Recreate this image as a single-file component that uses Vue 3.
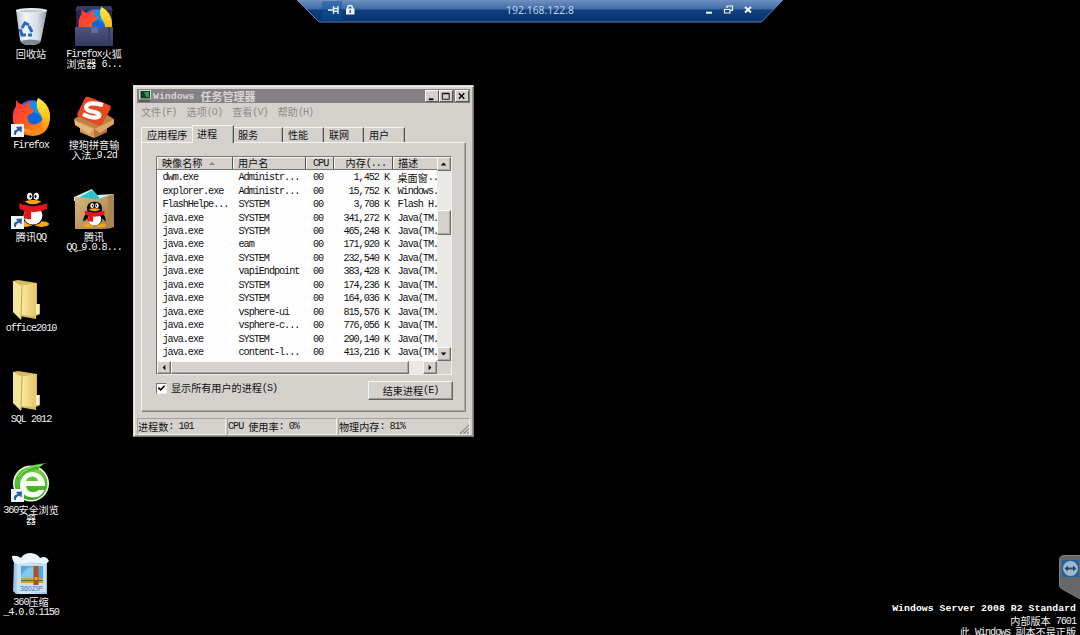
<script setup>
import { h } from 'vue'

// Splits mixed text so half-width glyphs sit on a narrower grid than CJK ones.
const T = (props) =>
  h('span', { class: 'tx' },
    (props.s.match(/[\x20-\x7e]+|[^\x20-\x7e]+/g) || []).map((p) =>
      h('span', { class: /^[\x20-\x7e]/.test(p) ? 'la' : 'cj' }, p)))
T.props = ['s']

const items = [
  { id: 'bin', col: 'a', row: 'r0', lines: ['回收站'] },
  { id: 'ffbox', col: 'b', row: 'r0', lines: ['Firefox火狐', '浏览器 6...'] },
  { id: 'ff', col: 'a', row: 'r1', lines: ['Firefox'], link: true },
  { id: 'sogou', col: 'b', row: 'r1', lines: ['搜狗拼音输', '入法_9.2d'] },
  { id: 'qq', col: 'a', row: 'r2', lines: ['腾讯QQ'], link: true },
  { id: 'qqbox', col: 'b', row: 'r2', lines: ['腾讯', 'QQ_9.0.8...'] },
  { id: 'folder', col: 'a', row: 'r3', lines: ['office2010'] },
  { id: 'folder', col: 'a', row: 'r4', lines: ['SQL 2012'] },
  { id: 'e360', col: 'a', row: 'r5', lines: ['360安全浏览', '器'], link: true },
  { id: 'zip', col: 'a', row: 'r6', lines: ['360压缩', '_4.0.0.1150'] },
]
const menus = ['文件(F)', '选项(O)', '查看(V)', '帮助(H)']
const rows = [
  ['dwm.exe', 'Administr...', '1,452 K', '桌面窗..'],
  ['explorer.exe', 'Administr...', '15,752 K', 'Windows.'],
  ['FlashHelpe...', 'SYSTEM', '3,708 K', 'Flash H.'],
  ['java.exe', 'SYSTEM', '341,272 K', 'Java(TM.'],
  ['java.exe', 'SYSTEM', '465,248 K', 'Java(TM.'],
  ['java.exe', 'eam', '171,920 K', 'Java(TM.'],
  ['java.exe', 'SYSTEM', '232,540 K', 'Java(TM.'],
  ['java.exe', 'vapiEndpoint', '383,428 K', 'Java(TM.'],
  ['java.exe', 'SYSTEM', '174,236 K', 'Java(TM.'],
  ['java.exe', 'SYSTEM', '164,036 K', 'Java(TM.'],
  ['java.exe', 'vsphere-ui', '815,576 K', 'Java(TM.'],
  ['java.exe', 'vsphere-c...', '776,056 K', 'Java(TM.'],
  ['java.exe', 'SYSTEM', '290,140 K', 'Java(TM.'],
  ['java.exe', 'content-l...', '413,216 K', 'Java(TM.'],
]
</script>

<template>
  <div class="desktop">
    <svg class="defs" width="0" height="0">
      <defs>
        <linearGradient id="gFire" x1="0" y1="0" x2="1" y2="1"><stop offset="0" stop-color="#ff2a45" /><stop offset=".5" stop-color="#ff5a20" /><stop offset="1" stop-color="#ffb010" /></linearGradient>
        <linearGradient id="gYel" x1="0" y1="0" x2="0" y2="1"><stop offset="0" stop-color="#fff04a" /><stop offset=".5" stop-color="#ffc51c" /><stop offset="1" stop-color="#ff7a18" /></linearGradient>
        <linearGradient id="gBin" x1="0" x2="1"><stop offset="0" stop-color="#b9c2cc" /><stop offset=".3" stop-color="#f2f6fa" /><stop offset=".7" stop-color="#d4dce5" /><stop offset="1" stop-color="#8f9aa6" /></linearGradient>
        <linearGradient id="gBox" x1="0" y1="0" x2="0" y2="1"><stop offset="0" stop-color="#4d5582" /><stop offset="1" stop-color="#33395f" /></linearGradient>
        <linearGradient id="gFold" x1="0" x2="1"><stop offset="0" stop-color="#fdf0a8" /><stop offset="1" stop-color="#e3c566" /></linearGradient>
        <linearGradient id="gKraft" x1="0" y1="0" x2="1" y2="1"><stop offset="0" stop-color="#d8b87c" /><stop offset="1" stop-color="#a17c47" /></linearGradient>
        <linearGradient id="gGreen" x1="0" y1="0" x2="0" y2="1"><stop offset="0" stop-color="#7bd64b" /><stop offset="1" stop-color="#2ba51c" /></linearGradient>
        <linearGradient id="gZip" x1="0" x2="1"><stop offset="0" stop-color="#8fbbe3" /><stop offset=".25" stop-color="#d9ecfa" /><stop offset="1" stop-color="#9dc4e8" /></linearGradient>
        <symbol id="fox" viewBox="0 0 40 40">
          <circle cx="21" cy="19" r="16" fill="#1267d8" />
          <path d="M14 8Q22 1 29 7L30 20Q23 13 16 16Z" fill="#1591ed" />
          <path d="M5 3Q9 8 13 8Q16 5 20 4Q17 9 20 12L23 13Q22 17 17 18Q15 24 20 27Q27 29 32 22Q32 16 28 12Q24 7 27 1Q39 7 39 21Q38 38 22 39Q4 38 2 24Q1 14 5 9Z" fill="url(#gFire)" />
          <path d="M27 1Q39 7 39 21Q38 33 27 37Q34 27 30 18Q23 10 27 1Z" fill="url(#gYel)" />
          <path d="M5 28Q14 40 29 33Q19 37 8 27Z" fill="#ff9c1f" />
        </symbol>
        <symbol id="penguin" viewBox="0 0 36 40">
          <ellipse cx="10" cy="36" rx="8" ry="3" fill="#f6a51a" /><ellipse cx="27" cy="36" rx="8" ry="3" fill="#f6a51a" />
          <path d="M7 17Q1 23 1 30Q4 30 7 26Q9 37 18 37Q28 37 30 26Q33 30 35 30Q35 23 29 17Z" fill="#080808" />
          <ellipse cx="18" cy="27" rx="10" ry="9.500" fill="#fff" />
          <path d="M7 14Q5 1 18 1Q31 1 29 14L27 19H9Z" fill="#080808" />
          <ellipse cx="14.500" cy="6.500" rx="2.800" ry="3.800" fill="#fff" /><ellipse cx="21.500" cy="6.500" rx="2.800" ry="3.800" fill="#fff" />
          <ellipse cx="15.300" cy="6.700" rx="1" ry="1.700" /><ellipse cx="20.700" cy="6.700" rx="1" ry="1.700" />
          <path d="M9 12Q18 9 27 12Q18 18 9 12Z" fill="#f6a51a" />
          <path d="M3 14Q18 20 33 14L33 20Q23 24 16 23V31L8 30L9 22L4 20Z" fill="#e5151c" />
        </symbol>
      </defs>
    </svg>

    <div v-for="(it, i) in items" :key="i" class="item" :class="[it.col, it.row]">
      <div class="pic">
        <svg v-if="it.id === 'bin'" viewBox="0 0 40 40">
          <path d="M5 4L9 34Q10 39 19 39Q29 39 30 34L36 4Z" fill="url(#gBin)" />
          <path d="M9.500 35Q19 32 30 35Q29 39 19 39Q11 39 9.500 35Z" fill="#7f8790" />
          <ellipse cx="20.500" cy="4.500" rx="15.500" ry="2.500" fill="#eef3f8" /><ellipse cx="20.500" cy="5" rx="13" ry="1.400" fill="#c3ccd5" />
          <g fill="none" stroke="#2769bd" stroke-width="3"><path d="M11 22L14 17L18 19" /><path d="M18 20L21 26" /><path d="M9 23L11 29L15 29" /><path d="M17 29H21" /></g>
        </svg>
        <svg v-else-if="it.id === 'ffbox'" viewBox="0 0 40 40">
          <path d="M3 0H37L39 5H1Z" fill="#363c60" /><rect x="2" y="4" width="36" height="19" fill="#25294a" />
          <svg x="3" y="0" width="36" height="36"><use href="#fox" /></svg>
          <rect x="1" y="21" width="38" height="19" fill="url(#gBox)" /><rect x="17" y="21" width="7" height="6" fill="#626a98" /><path d="M35 21V40" stroke="#2c3156" stroke-width="1" />
        </svg>
        <svg v-else-if="it.id === 'ff'" viewBox="0 0 40 40"><use href="#fox" /></svg>
        <svg v-else-if="it.id === 'sogou'" viewBox="0 0 40 40">
          <path d="M0 22L8 17L20 25L32 17L40 22L33 27V35L20 41L6 35V27Z" fill="#bd8046" />
          <path d="M6 25L20 31V41L6 35Z" fill="#d89a5a" /><path d="M20 31L33 26V35L20 41Z" fill="#b57439" />
          <path d="M0 22L7 27L20 32L15 37L1 28Z" fill="#e8b77b" /><path d="M40 22L33 26L20 32L26 36L40 27Z" fill="#dca667" />
          <path d="M11 1Q12 -1 15 0L35 8Q38 9 36 13L28 27Q26 30 23 28L5 20Q2 18 4 15Z" fill="#e8481f" />
          <path d="M29 8Q14 4 12 10Q12 14 21 15Q28 17 24 20Q18 22 9 17" fill="none" stroke="#fff" stroke-width="4.200" />
        </svg>
        <svg v-else-if="it.id === 'qq'" viewBox="0 0 40 40"><svg x="5" y="1" width="34" height="38"><use href="#penguin" /></svg></svg>
        <svg v-else-if="it.id === 'qqbox'" viewBox="0 0 40 40">
          <path d="M0 8L18 0L23 6L40 5V12H0Z" fill="#d3f0ed" /><path d="M6 8L18 1L25 8V14H5Z" fill="#27c5d2" />
          <path d="M1 8L24 10L39 5V37L32 40H1Z" fill="url(#gKraft)" /><path d="M34 7L40 5V38L34 40Z" fill="#a98651" />
          <svg x="8.500" y="12" width="24" height="27"><use href="#penguin" /></svg>
        </svg>
        <svg v-else-if="it.id === 'folder'" viewBox="0 0 40 40">
          <path d="M2 1L7 0L26 3V24H29V34L25 36V39L8 36Z" fill="#d8ba61" />
          <path d="M9 6L25 3V36L10 35Z" fill="url(#gFold)" /><path d="M2 1L11 6L10 40L2 32Z" fill="#f7e59c" />
          <path d="M11 6L10 39" stroke="#c6a64f" stroke-width="1" /><path d="M25 24H28V34H25Z" fill="#f9eeb5" />
        </svg>
        <svg v-else-if="it.id === 'e360'" viewBox="0 0 40 40">
          <circle cx="20" cy="21.500" r="18" fill="#f5fff0" /><circle cx="20" cy="21.500" r="16.500" fill="url(#gGreen)" />
          <path d="M34 24H15Q16 30 22 30Q26 30 28 28H33.500Q30 36 21 35.500Q9 34 9 23Q10 11 21 10Q34 11 34 24ZM15 19H27Q26 14.500 21 14.500Q16 15 15 19Z" fill="#f6fff0" fill-rule="evenodd" />
          <path d="M5 16Q14 2 37 1Q30 2 27 8Q16 7 7 18Z" fill="#49b72b" /><path d="M7 15Q16 4 31 3" fill="none" stroke="#a6ed75" stroke-width="1" />
        </svg>
        <svg v-else viewBox="0 0 40 40">
          <path d="M3 5H36V40H5L2 37Z" fill="url(#gZip)" /><path d="M6 10H35V38H6Z" fill="#c7e0f5" />
          <rect x="10" y="12" width="22" height="17" fill="#55a9de" /><path d="M10 22Q16 10 25 14V29H10Z" fill="#82c9ec" />
          <rect x="10" y="24" width="22" height="5" fill="#c8a636" /><path d="M10 26.500H32" stroke="#477c2e" stroke-width="1" />
          <rect x="22.500" y="12" width="5" height="19" fill="#a75227" /><rect x="23.500" y="23" width="3" height="3" fill="#f0a035" />
          <path d="M1 2Q6 1 10 4Q13 -1 20 -1Q27 0 29 4Q35 1 38 7L35 10Q20 7 7 10Q1 9 1 2Z" fill="#eaf6ff" />
          <text x="9" y="37" font-size="7" font-family="Liberation Sans, sans-serif" fill="#3c70aa">360ZIP</text>
        </svg>
        <svg v-if="it.link" class="link" viewBox="0 0 13 13"><rect width="13" height="13" fill="#eef3f7" /><path d="M3.500 11Q1.500 6.500 6.500 5.200L5 3L11 2.500L10.500 8.500L8.500 6.800Q4.500 7.500 5 11Z" fill="#245da6" /></svg>
      </div>
      <div class="caption"><div v-for="l in it.lines" :key="l"><T :s="l" /></div></div>
    </div>

    <div class="rdp">
      <svg class="rdp-bg" viewBox="0 0 486 23">
        <defs><linearGradient id="gBar" x1="0" y1="0" x2="0" y2="1"><stop offset="0" stop-color="#6e92c1" /><stop offset=".4" stop-color="#3f6ba7" /><stop offset=".46" stop-color="#12407e" /><stop offset="1" stop-color="#02326f" /></linearGradient></defs>
        <path d="M0 0H486L464.500 22H22Z" fill="url(#gBar)" /><path d="M0 0L22 22H464.500L486 0" fill="none" stroke="#6380a5" stroke-width="1" />
        <rect x="25" y="1" width="20" height="19" fill="#0754a0" opacity=".45" />
        <g fill="none" stroke="#edf3fa" stroke-width="1.400"><path d="M31 10H36M36.500 6V14M36.500 8.500H41.500M36.500 11.300H41.500M41 6V14" /><path d="M50.500 9V8Q50.500 5.500 53 5.500Q55.500 5.500 55.500 8V9" /></g>
        <rect x="49" y="8.500" width="8.500" height="6" rx=".5" fill="#edf3fa" /><path d="M53.200 10V13" stroke="#153f79" stroke-width="1.200" />
        <g fill="none" stroke="#f3f7fc"><path d="M409 12.700H415" stroke-width="2" /><path d="M427.500 9.500H433V13H427.500ZM430 8V6H435.500V10.500H433" stroke-width="1.200" /><path d="M448 7L454 12.500M454 7L448 12.500" stroke-width="2" /></g>
      </svg>
      <span class="rdp-title">192.168.122.8</span>
    </div>

    <div class="win">
      <div class="title">
        <svg class="appicon" viewBox="0 0 14 14"><rect x="1" y="1" width="12" height="9" fill="#d7dad6" /><rect x="2.500" y="2" width="9.500" height="7.500" fill="#123a20" /><path d="M6 3H11V8H8Z" fill="#2f9a45" /><rect x="1" y="11" width="11" height="2" fill="#595c58" /></svg>
        <b><T s="Windows 任务管理器" /></b>
        <div class="ctl">
          <i><svg viewBox="0 0 13 12"><path d="M3 9H8" stroke="#000" stroke-width="2" /></svg></i>
          <i><svg viewBox="0 0 13 12"><path d="M2.500 2.500H10V9H2.500ZM2.500 3H10" fill="none" stroke="#000" /></svg></i>
          <i class="x"><svg viewBox="0 0 13 12"><path d="M3 2.500L9 8.500M9 2.500L3 8.500" stroke="#000" stroke-width="1.500" /></svg></i>
        </div>
      </div>
      <div class="menu"><span v-for="m in menus" :key="m"><T :s="m" /></span></div>
      <div class="tabs">
        <span class="tab t1"><T s="应用程序" /></span><span class="tab on"><T s="进程" /></span><span class="tab t3"><T s="服务" /></span><span class="tab t4"><T s="性能" /></span><span class="tab t5"><T s="联网" /></span><span class="tab t6"><T s="用户" /></span>
      </div>
      <div class="panel">
        <div class="list">
          <div class="main">
            <div class="row head">
              <span><T s="映像名称" /><svg class="sort" viewBox="0 0 6 3"><path d="M0 3L3 0L6 3Z" fill="#8a8883" /></svg></span><span><T s="用户名" /></span><span><T s="CPU" /></span><span><T s="内存(..." /></span><span><T s="描述" /></span>
            </div>
            <div class="body">
              <div v-for="(r, i) in rows" :key="i" class="row">
                <span><T :s="r[0]" /></span><span><T :s="r[1]" /></span><span><T s="00" /></span><span><T :s="r[2]" /></span><span><T :s="r[3]" /></span>
              </div>
            </div>
            <div class="hbar">
              <i class="sb"><svg viewBox="0 0 13 13"><path d="M8 3V9L5 6Z" /></svg></i>
              <i class="hthumb"></i><i class="gap"></i>
              <i class="sb"><svg viewBox="0 0 13 13"><path d="M5 3V9L8 6Z" /></svg></i>
            </div>
          </div>
          <div class="vbar">
            <i class="sb"><svg viewBox="0 0 13 13"><path d="M3 8H9L6 5Z" /></svg></i>
            <i class="vtop"></i><i class="vthumb"></i><i class="gap"></i>
            <i class="sb"><svg viewBox="0 0 13 13"><path d="M3 5H9L6 8Z" /></svg></i>
            <i class="corner"></i>
          </div>
        </div>
        <div class="actions">
          <label><span class="check"><svg viewBox="0 0 10 10"><path d="M1.500 4L4 6.500L8.500 2" fill="none" stroke="#000" stroke-width="1.700" /></svg></span><T s="显示所有用户的进程(S)" /></label>
          <div class="btn"><T s="结束进程(E)" /></div>
        </div>
      </div>
      <div class="status">
        <span><T s="进程数: 101" /></span><span><T s="CPU 使用率: 0%" /></span><span><T s="物理内存: 81%" /></span>
        <svg class="grip" viewBox="0 0 11 11"><path d="M1 11L11 1M5 11L11 5M9 11L11 9" stroke="#8a8883" stroke-width="1.300" /></svg>
      </div>
    </div>

    <svg class="tv" viewBox="0 0 22 45">
      <path d="M22 .500H5Q.500 .500 .500 5V30Q.500 33 4 34.500L22 44.500Z" fill="#686868" stroke="#7d7d7d" />
      <rect x="3" y="5" width="17" height="17" fill="#1767a8" /><circle cx="11.500" cy="13.500" r="7.500" fill="#a8b7c4" />
      <path d="M5.500 13.500L9 10.500V12.500H14V10.500L17.500 13.500L14 16.500V14.500H9V16.500Z" fill="#174f80" />
    </svg>
    <div class="mark">
      <b><T s="Windows Server 2008 R2 Standard" /></b>
      <T s="内部版本 7601" />
      <T s="此 Windows 副本不是正版" />
    </div>
  </div>
</template>

<style>
body { background: #000; overflow: hidden; }
.tx { white-space: pre; display: inline-flex; align-items: center; vertical-align: top; height: 10px; line-height: 10px; }
.tx .la { font: 10.2px/10px "Liberation Mono", monospace; letter-spacing: -1.05px; padding-top: 1px; }
.tx .cj { font: 10.1px/10px "Noto Sans CJK SC", sans-serif; }
</style>

<style scoped>
* { box-sizing: border-box; }
.desktop { position: relative; width: 1080px; height: 635px; background: #000; overflow: hidden; line-height: 10px; color: #111; }
svg { display: block; overflow: visible; }
.defs { position: absolute; }
i { font-style: normal; display: block; }
.item { position: absolute; width: 70px; color: #f2f2f2; }
.a { left: -4px; } .b { left: 59px; }
.r0 { top: 6px; } .r1 { top: 97px; } .r2 { top: 189px; } .r3 { top: 280px; } .r4 { top: 371px; } .r5 { top: 462px; } .r6 { top: 554px; }
.pic { position: relative; width: 40px; height: 40px; margin: 0 auto; }
.pic > svg { width: 40px; height: 40px; }
.pic > svg.link { position: absolute; left: 0; bottom: 0; width: 13px; height: 13px; }
.caption { margin-top: 3px; display: flex; flex-direction: column; align-items: center; }
.caption > div { height: 10px; }

.rdp { position: absolute; left: 297px; top: 0; width: 486px; height: 23px; display: flex; justify-content: center; }
.rdp-bg { position: absolute; inset: 0; width: 486px; height: 23px; }
.rdp-title { position: relative; font: 10.4px/21px "Noto Sans", sans-serif; color: #c0d2e8; }

.win { position: absolute; left: 133px; top: 85px; width: 341px; height: 352px; padding: 3px 3px 2px; background: #d5d2cd; border: 1px solid #777; border-top-color: #d6d3ce; border-left-color: #d6d3ce; box-shadow: inset 1px 1px #f5f4f1, inset -1px -1px #9b9894; display: flex; flex-direction: column; }
.title { flex: none; height: 14px; background: #858287; color: #d9d6d1; display: flex; align-items: center; }
.title b { display: flex; }
.appicon { width: 14px; height: 14px; margin: 0 1px 0 1px; }
.title :deep(.la), .mark b :deep(.la) { font-weight: 700; font-size: 9.8px; letter-spacing: 0.05px; }
.title :deep(.cj) { font-weight: 700; font-size: 11px; }
.ctl { margin-left: auto; display: flex; padding-right: 1px; }
.ctl i { width: 14px; height: 12px; background: #d5d2cd; border: 1px solid #555; border-top-color: #fff; border-left-color: #fff; }
.ctl .x { margin-left: 2px; }
.ctl svg { width: 12px; height: 11px; }
.menu { flex: none; height: 20px; display: flex; gap: 10.200px; padding: 4px 0 0 4px; color: #8d8a86; }
.tabs { flex: none; height: 19px; display: flex; align-items: flex-end; padding-left: 4px; }
.tab { height: 15px; display: flex; padding-top: 2px; border-top: 1px solid #f5f4f1; border-right: 1px solid #55534f; padding-left: 5px; box-shadow: inset -1px 0 #b0ada8; }
.t1 { width: 51px; border-left: 1px solid #f5f4f1; border-right: 0; padding-left: 5px; box-shadow: none; }
.on { width: 42px; height: 18px; border-left: 1px solid #f5f4f1; padding-left: 4px; padding-top: 3px; margin-bottom: -1px; background: #d5d2cd; position: relative; z-index: 1; }
.t3 { width: 49px; padding-left: 4px; } .t4 { width: 41px; } .t5 { width: 40px; } .t6 { width: 41px; }
.panel { flex: none; height: 270px; margin: 0 4px; padding: 13px 0 0 14px; border: 1px solid #858380; border-top-color: #f5f4f1; border-left-color: #f5f4f1; box-shadow: inset -1px -1px #aaa7a3; }
.list { display: flex; width: 296px; height: 219px; border: 1px solid #777570; border-right-color: #f3f1ee; border-bottom-color: #f3f1ee; background: #fefefe; }
.main { width: 280px; display: flex; flex-direction: column; }
.row { display: grid; grid-template-columns: 76px 73px 28px 59px 44px; flex: none; height: 13.460px; }
.row > span { min-width: 0; white-space: nowrap; display: flex; align-items: center; padding-left: 5.500px; }
.row > span:nth-child(3) { padding-left: 7px; }
.row > span:nth-child(4) { padding: 0 4px 0 0; justify-content: flex-end; }
.row > span:nth-child(5) { padding-left: 4.500px; }
.head { height: 13px; background: #d5d2cd; border-bottom: 1px solid #777570; }
.row.head > span { border-right: 1px solid #55534f; box-shadow: inset 1px 1px #f8f7f4; padding-left: 5px; }
.row.head > span:nth-child(3) { padding-left: 7px; }
.row.head > span:nth-child(4) { padding: 0 6px 0 0; }
.row.head > span:nth-child(5) { border-right: 0; }
.sort { width: 6px; height: 3px; margin-left: 7px; }
.body { height: 190.500px; flex: none; padding-top: 1px; }
.hbar { flex: 1; display: flex; background: #ebe9e6; min-height: 0; }
.sb { width: 14px; height: 13.500px; flex: none; background: #d5d2cd; border: 1px solid #706e6a; border-top-color: #f8f7f4; border-left-color: #f8f7f4; box-shadow: inset -1px -1px #aaa7a3; }
.sb svg { width: 12px; height: 12px; }
.hthumb { width: 238px; background: #d5d2cd; border: 1px solid #706e6a; border-top-color: #f8f7f4; border-left-color: #f8f7f4; box-shadow: inset -1px -1px #aaa7a3; }
.gap { flex: 1; }
.vbar { width: 14px; display: flex; flex-direction: column; background: #ebe9e6; }
.vtop { height: 39px; }
.vthumb { height: 25px; background: #d5d2cd; border: 1px solid #706e6a; border-top-color: #f8f7f4; border-left-color: #f8f7f4; box-shadow: inset -1px -1px #aaa7a3; }
.corner { height: 13.500px; background: #d5d2cd; }
.actions { display: flex; justify-content: space-between; padding-top: 5px; width: 297px; }
.actions label { display: flex; align-items: center; gap: 4px; height: 16px; }
.check { width: 11px; height: 11px; background: #fff; border: 1px solid #777570; border-right-color: #eee; border-bottom-color: #eee; }
.check svg { width: 9px; height: 9px; }
.btn { width: 85px; height: 19px; margin-top: 1px; display: flex; align-items: center; justify-content: center; border: 1px solid #666460; border-top-color: #f8f7f4; border-left-color: #f8f7f4; box-shadow: inset -1px -1px #9c9a95; }
.status { position: relative; flex: none; display: flex; gap: 1px; height: 17px; margin-top: 6px; }
.status > span { border: 1px solid #a5a29e; border-right-color: #f3f1ee; border-bottom-color: #f3f1ee; width: 89px; white-space: nowrap; display: flex; align-items: center; }
.status > span:nth-child(2) { width: 110px; }
.status > span:nth-child(3) { width: 132px; }
.grip { position: absolute; right: 1px; bottom: 1px; width: 10px; height: 10px; }

.tv { position: absolute; left: 1059px; top: 554.500px; width: 22px; height: 45px; }
.mark { position: absolute; right: 4px; top: 603px; color: #f2f2f2; display: flex; flex-direction: column; align-items: flex-end; gap: 1px; }
.mark b { height: 12px; color: #fff; }
</style>
